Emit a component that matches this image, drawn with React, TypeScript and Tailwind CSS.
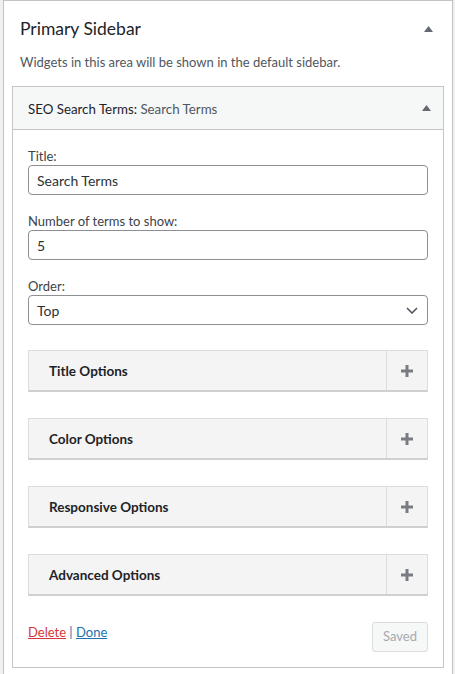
import React from 'react';

const font = { fontFamily: 'Lato, "Noto Sans", sans-serif' };

const TriangleUp = () => (
  <svg width="9" height="6" viewBox="0 0 9 6" className="text-[#646970]">
    <path d="M4.5 0 L9 6 L0 6 Z" fill="currentColor" />
  </svg>
);

const Plus = () => (
  <svg width="12" height="12" viewBox="0 0 12 12" className="text-[#787c82]">
    <rect x="4.5" y="0" width="3" height="12" fill="currentColor" />
    <rect x="0" y="4.5" width="12" height="3" fill="currentColor" />
  </svg>
);

const Chevron = () => (
  <svg width="12" height="7" viewBox="0 0 12 7" className="text-[#50575e]">
    <path d="M1 1 L6 6 L11 1" fill="none" stroke="currentColor" strokeWidth="1.6" />
  </svg>
);

const Field = ({ label, value, select }: { label: string; value: string; select?: boolean }) => (
  <div className="mt-[17px] first:mt-0">
    <div className="pt-[1px] text-[13px] leading-[17px] text-[#3c434a]">{label}</div>
    <div className="flex h-[30px] items-center justify-between rounded-[4px] border border-[#8c8f94] bg-white pl-[8px] pr-[9px] text-[14px] text-[#2c3338]">
      <span>{value}</span>
      {select && <Chevron />}
    </div>
  </div>
);

const Section = ({ title }: { title: string }) => (
  <div className="mt-[26px] flex h-[42px] border border-b-2 border-[#dcdcde] border-b-[#d0d0d0] bg-[#f4f4f4] first:mt-0">
    <div className="flex flex-1 items-center pl-[20px] pt-[2px] text-[13.5px] font-bold text-[#1d2327]">{title}</div>
    <div className="flex w-[41px] items-center justify-center border-l border-[#dcdcde]">
      <Plus />
    </div>
  </div>
);

export default function App() {
  const sections = ['Title Options', 'Color Options', 'Responsive Options', 'Advanced Options'];

  return (
    <div className="min-h-screen bg-[#f0f0f1] pl-[3px] pr-[2px]" style={font}>
      <div className="min-h-[680px] border border-[#c3c4c7] bg-white px-[8px]">
        {/* sidebar heading */}
        <div className="flex items-center justify-between pl-[8px] pr-[11px] pt-[14px]">
          <h2 className="text-[17.5px] leading-[28px] text-[#1d2327]">Primary Sidebar</h2>
          <TriangleUp />
        </div>
        <p className="mt-[9px] pl-[8px] text-[13px] leading-[20px] text-[#50575e]">
          Widgets in this area will be shown in the default sidebar.
        </p>

        {/* widget */}
        <div className="mt-[14px] border border-[#c3c4c7]">
          <div className="flex h-[43px] items-center justify-between border-b border-[#c3c4c7] bg-[#f6f7f7] pl-[15px] pr-[12px]">
            <h3 className="pt-[3px] text-[13.3px] text-[#1d2327]">
              SEO Search Terms: <span className="text-[#50575e]">Search Terms</span>
            </h3>
            <TriangleUp />
          </div>

          <div className="px-[15px] pb-[15px] pt-[17px]">
            <div>
              <Field label="Title:" value="Search Terms" />
              <Field label="Number of terms to show:" value="5" />
              <Field label="Order:" value="Top" select />
            </div>

            <div className="mt-[25px]">
              {sections.map((s) => (
                <Section key={s} title={s} />
              ))}
            </div>

            <div className="mt-[26px] flex items-start justify-between">
              <div className="text-[13px] leading-[20px]">
                <a className="text-[#d63638] underline" href="#">Delete</a>
                <span className="text-[#2271b1]"> | </span>
                <a className="text-[#2271b1] underline" href="#">Done</a>
              </div>
              <button className="h-[30px] rounded-[3px] border border-[#dcdcde] bg-[#f6f7f7] px-[10px] text-[13px] text-[#a7aaad]">
                Saved
              </button>
            </div>
          </div>
        </div>
      </div>
    </div>
  );
}
